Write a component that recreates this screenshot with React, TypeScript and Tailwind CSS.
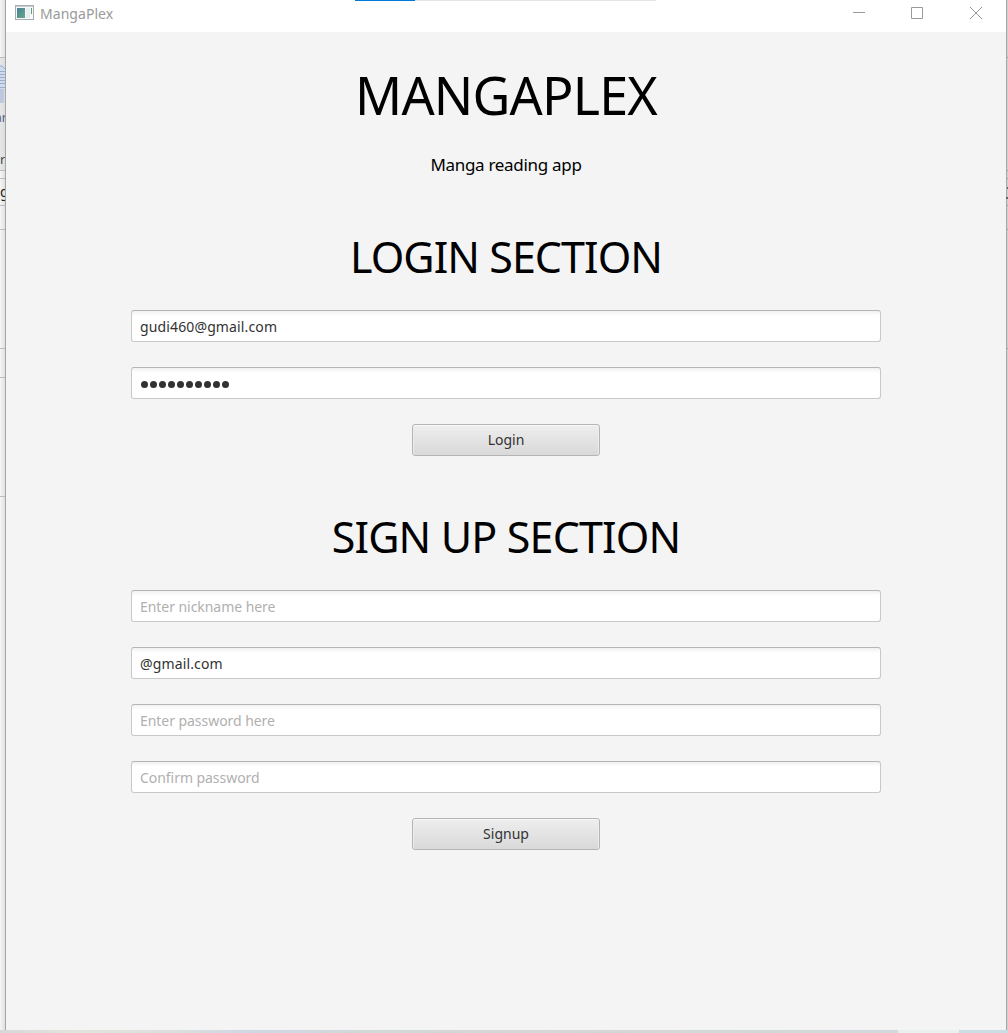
import React from "react";

function Field({ value, placeholder, password }: { value?: string; placeholder?: string; password?: boolean }) {
  return (
    <div className="flex h-8 w-[750px] items-center rounded-[3px] border border-[#c8c8c8] border-t-[#b5b5b5] bg-white bg-linear-to-b from-[#f1f1f1] to-white to-[5px] pl-2 text-[14px] leading-none">
      {password ? (
        <div className="flex gap-[2px] pt-[3px] pl-px">
          {Array.from({ length: 10 }, (_, i) => (
            <span key={i} className="size-[7px] rounded-full bg-[#323232]" />
          ))}
        </div>
      ) : value ? (
        <span className="pt-px tracking-[0.13px] whitespace-nowrap text-[#323232]">{value}</span>
      ) : (
        <span className="pt-px tracking-[-0.05px] whitespace-nowrap text-[#b0b0b0]">{placeholder}</span>
      )}
    </div>
  );
}

function Button({ children }: { children: React.ReactNode }) {
  return (
    <button className="flex h-8 w-[188px] items-center justify-center rounded-[3px] border border-[#b5b5b5] bg-linear-to-b from-[#eeeeee] to-[#d9d9d9] text-[14px] leading-none text-[#323232] shadow-[inset_0_1px_0_#f8f8f8,inset_1px_0_0_#ececec,inset_-1px_0_0_#ececec]">
      {children}
    </button>
  );
}

function LeftEdge() {
  return (
    <svg className="block h-[1030px] w-[6px] shrink-0" viewBox="0 0 6 1030">
      <defs>
        <linearGradient id="edge">
          <stop offset="0" stopColor="#f6f6f6" />
          <stop offset="1" stopColor="#dcdcdc" />
        </linearGradient>
      </defs>
      <rect width="6" height="1030" fill="url(#edge)" />
      <rect y="58" width="5" height="112" fill="#d9dce0" fillOpacity=".6" />
      {[57, 170, 178, 205, 229, 348, 377, 496].map((y) => (
        <rect key={y} y={y} width="5" height="1" fill="#bcbcbc" />
      ))}
      <path d="M0 66h3l2 3v20H0z" fill="#cfdcef" />
      <path d="M0 66h2l3 3M0 71.500h5M0 74.500h5M0 77.500h5M0 80.500h5M0 83.500h5M0 87.500h5" stroke="#9aaecb" fill="none" />
      <rect y="89" width="4" height="14" fill="#bdc9df" />
      <text x="-5" y="122" fontSize="12" fill="#59616d" fontFamily="Noto Sans, sans-serif">ar</text>
      <text x="0" y="164" fontSize="13" fill="#4a4a4a" fontFamily="Noto Sans, sans-serif">r</text>
      <text x="0" y="197" fontSize="14" fill="#222" fontFamily="Noto Sans, sans-serif">g</text>
      <rect x="5" width="1" height="1030" fill="#a5a5a5" />
    </svg>
  );
}

function RightEdge() {
  return (
    <svg className="block h-[1030px] w-[2px] shrink-0" viewBox="0 0 2 1030">
      <rect width="1" height="1030" fill="#a8a8a8" />
      <rect x="1" width="1" height="1030" fill="#cfcfcf" />
      {[57, 170, 178, 205, 229, 348].map((y) => (
        <rect key={y} x="1" y={y} width="1" height="1" fill="#a0a0a0" />
      ))}
      <path d="M1 187h1v2h-1zM0 197h2v2h-2z" fill="#666" />
    </svg>
  );
}

export default function App() {
  return (
    <div className="h-[1033px] w-[1008px] overflow-hidden bg-white font-['Noto_Sans',sans-serif]">
      <div className="flex h-[1030px]">
        <LeftEdge />
        <main className="flex h-[1030px] w-[1000px] flex-col bg-[#f4f4f4]">
          <header className="relative flex h-8 shrink-0 items-start bg-white">
            <div className="absolute top-0 left-[349px] flex h-px w-[301px] bg-[#e5e5e5]">
              <div className="w-[60px] bg-[#0078d7]" />
            </div>
            <svg className="mt-[5px] ml-[9px] block" width="19" height="15" viewBox="0 0 19 15">
              <defs>
                <linearGradient id="ic" x1="0" y1="0" x2="1" y2="1">
                  <stop offset="0" stopColor="#4a809c" />
                  <stop offset="1" stopColor="#63a886" />
                </linearGradient>
              </defs>
              <rect x=".5" y=".5" width="18" height="14" fill="#f8f9f9" stroke="#a9adb0" />
              <path d="M1 1.500h17" stroke="#c5cbd3" />
              <rect x="2" y="3" width="8" height="10" fill="url(#ic)" />
              <rect x="11" y="3" width="4" height="10" fill="#e9eef0" />
              <path d="M16.500 3v6" stroke="#5b9c8b" />
            </svg>
            <span className="mt-[4px] ml-[6px] text-[14px] leading-[20px] tracking-[0.05px] whitespace-nowrap text-[#999]">MangaPlex</span>
            <svg className="ml-auto block" width="160" height="32" viewBox="0 0 160 32" fill="none" stroke="#999">
              <path d="M7 12.500h12M65.500 7.500h11v11h-11z" />
              <path d="M124 7l12 12M136 7l-12 12" />
            </svg>
          </header>
          <section className="flex flex-col items-center text-black">
            <h1 className="mt-[33px] text-[52px] leading-[60px] tracking-[-0.8px] whitespace-nowrap">MANGAPLEX</h1>
            <p className="mt-[28px] text-[17px] leading-6 tracking-[-0.3px] whitespace-nowrap">Manga reading app</p>
            <h2 className="mt-[55px] text-[43px] leading-[50px] tracking-[-0.95px] whitespace-nowrap">LOGIN SECTION</h2>
            <form className="mt-[28px] flex flex-col items-center gap-[25px]">
              <Field value="gudi460@gmail.com" />
              <Field password />
              <Button>Login</Button>
            </form>
            <h2 className="mt-[56px] text-[43px] leading-[50px] tracking-[-0.85px] whitespace-nowrap">SIGN UP SECTION</h2>
            <form className="mt-[28px] flex flex-col items-center gap-[25px]">
              <Field placeholder="Enter nickname here" />
              <Field value="@gmail.com" />
              <Field placeholder="Enter password here" />
              <Field placeholder="Confirm password" />
              <Button>Signup</Button>
            </form>
          </section>
        </main>
        <RightEdge />
      </div>
      <footer className="flex h-[3px]">
        <div className="w-[898px] bg-[linear-gradient(90deg,#d8d8d8_0,#e2e3dd_8%,#dcdfdc_19%,#cfd7e5_28%,#d2d8d8_40%,#d6d6d6_55%,#d3d8d6_85%,#d3d8de_100%)]" />
        <div className="w-[61px] bg-[#ecefef]" />
        <div className="flex-1 bg-[#cbdde4]" />
      </footer>
    </div>
  );
}
